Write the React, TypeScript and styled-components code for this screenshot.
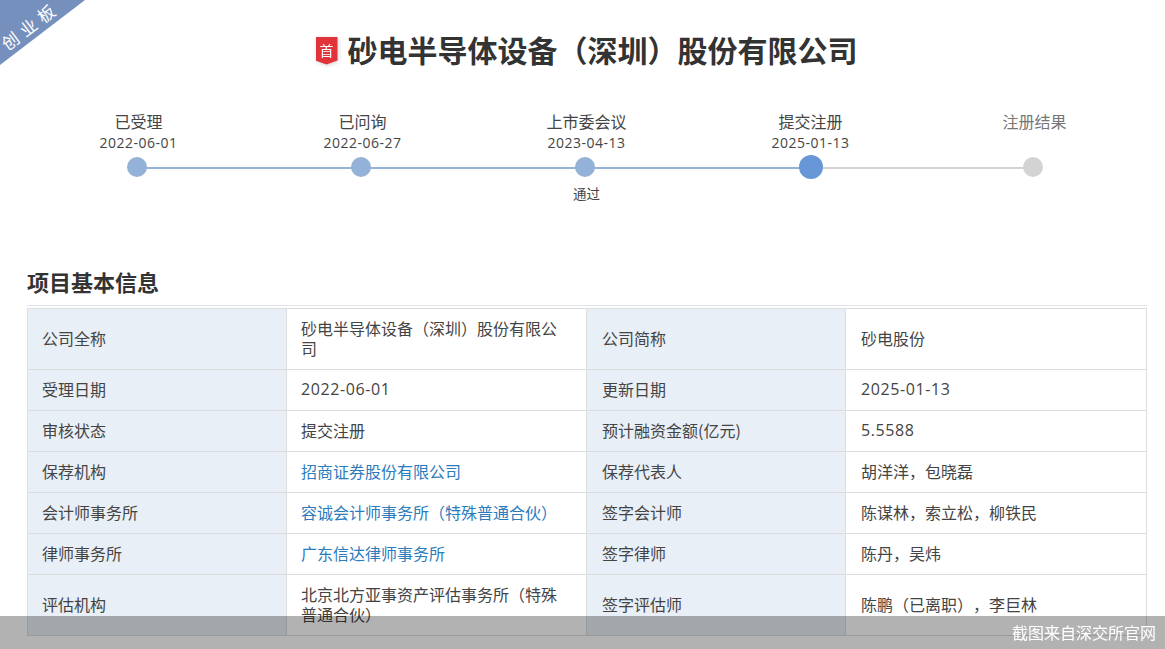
import React from 'react'
import styled, { createGlobalStyle } from 'styled-components'

const GlobalStyle = createGlobalStyle`
  html, body {
    margin: 0;
    height: 100%;
    overflow: hidden;
    background: #fff;
    font-family: "Noto Sans CJK SC", "Noto Sans", sans-serif;
    color: #333;
    text-spacing-trim: space-all;
  }
`

const numberFont = `"Open Sans", "Noto Sans CJK SC", sans-serif`

const steps = [
  { name: '已受理', date: '2022-06-01', state: 'done' },
  { name: '已问询', date: '2022-06-27', state: 'done' },
  { name: '上市委会议', date: '2023-04-13', state: 'done', note: '通过' },
  { name: '提交注册', date: '2025-01-13', state: 'current' },
  { name: '注册结果', date: '', state: 'todo' },
]

type Cell = { text: string; link?: boolean; num?: boolean }
const rows: [string, Cell, string, Cell][] = [
  ['公司全称', { text: '砂电半导体设备（深圳）股份有限公司' }, '公司简称', { text: '砂电股份' }],
  ['受理日期', { text: '2022-06-01', num: true }, '更新日期', { text: '2025-01-13', num: true }],
  ['审核状态', { text: '提交注册' }, '预计融资金额(亿元)', { text: '5.5588', num: true }],
  ['保荐机构', { text: '招商证券股份有限公司', link: true }, '保荐代表人', { text: '胡洋洋，包晓磊' }],
  ['会计师事务所', { text: '容诚会计师事务所（特殊普通合伙）', link: true }, '签字会计师', { text: '陈谋林，索立松，柳铁民' }],
  ['律师事务所', { text: '广东信达律师事务所', link: true }, '签字律师', { text: '陈丹，吴炜' }],
  ['评估机构', { text: '北京北方亚事资产评估事务所（特殊普通合伙）' }, '签字评估师', { text: '陈鹏（已离职），李巨林' }],
]

const App = () => {
  return (
    <Page>
      <GlobalStyle />
      <Ribbon>
        <RibbonText>创 业 板</RibbonText>
      </Ribbon>
      <TitleRow>
        <BadgeWrap>
          <Badge>首</Badge>
        </BadgeWrap>
        <Title>砂电半导体设备（深圳）股份有限公司</Title>
      </TitleRow>
      <Timeline>
        {steps.map((step, i) => (
          <Step key={step.name}>
            <StepName $todo={step.state === 'todo'}>{step.name}</StepName>
            <StepDate>{step.date}</StepDate>
            <Track>
              {i < steps.length - 1 && <Connector $state={step.state} />}
              <Dot $state={step.state} />
            </Track>
            {step.note && <StepNote>{step.note}</StepNote>}
          </Step>
        ))}
      </Timeline>
      <SectionTitle>项目基本信息</SectionTitle>
      <InfoTable>
        <colgroup>
          <col width="259" />
          <col width="300" />
          <col width="259" />
          <col width="301" />
        </colgroup>
        <tbody>
          {rows.map(([k1, v1, k2, v2]) => (
            <tr key={k1}>
              <Label>{k1}</Label>
              <Value $link={v1.link} $num={v1.num}>{v1.text}</Value>
              <Label>{k2}</Label>
              <Value $link={v2.link} $num={v2.num}>{v2.text}</Value>
            </tr>
          ))}
        </tbody>
      </InfoTable>
      <Watermark>截图来自深交所官网</Watermark>
    </Page>
  )
}

export default App

const Page = styled.div`
  padding: 0 18px 0 27px;
  height: 649px;
  box-sizing: border-box;
  overflow: hidden;
`

const Ribbon = styled.div`
  position: absolute;
  left: 0;
  top: 0;
  width: 85px;
  height: 65px;
  background: #7690bd;
  clip-path: polygon(0 0, 100% 0, 0 100%);
`

const RibbonText = styled.span`
  position: absolute;
  left: -3px;
  top: 17px;
  width: 62px;
  font-size: 17px;
  line-height: 20px;
  word-spacing: 1.5px;
  color: #fff;
  white-space: nowrap;
  text-align: center;
  transform: rotate(-37deg);
`

const TitleRow = styled.div`
  display: flex;
  align-items: center;
  justify-content: center;
  gap: 10px;
  height: 100px;
  margin-left: -1px;
  padding-bottom: 3px;
  box-sizing: border-box;
`

const BadgeWrap = styled.div`
  flex: none;
  margin-top: 4px;
  filter: drop-shadow(1px 1px 2px rgba(0, 0, 0, 0.18));
`

const Badge = styled.div`
  width: 22px;
  height: 28px;
  padding-top: 4px;
  box-sizing: border-box;
  background: #e1333a;
  color: #fff;
  font-size: 14px;
  line-height: 18px;
  text-align: center;
  clip-path: polygon(0 0, 100% 0, 100% 86%, 50% 100%, 0 86%);
`

const Title = styled.h1`
  margin: 0;
  font-size: 30px;
  line-height: 40px;
  font-weight: 700;
  color: #333;
`

const Timeline = styled.div`
  display: flex;
  margin-left: -2px;
  height: 170px;
`

const Step = styled.div`
  width: 224px;
  flex: none;
  display: flex;
  flex-direction: column;
  align-items: center;
  padding-top: 10px;
`

const StepName = styled.div<{ $todo?: boolean }>`
  padding-left: 3px;
  font-size: 16px;
  line-height: 22px;
  color: ${({ $todo }) => ($todo ? '#777' : '#444')};
  white-space: nowrap;
`

const StepDate = styled.div`
  padding-left: 3px;
  font-family: ${numberFont};
  font-size: 14px;
  letter-spacing: 0.5px;
  line-height: 22px;
  height: 20px;
  color: #444;
`

const Track = styled.div`
  position: relative;
  width: 100%;
  height: 28px;
  margin-top: 1px;
  display: flex;
  align-items: center;
  justify-content: center;
`

const Connector = styled.div<{ $state: string }>`
  position: absolute;
  left: 50%;
  top: 14px;
  width: 100%;
  height: 2px;
  background: ${({ $state }) => ($state === 'current' ? '#d3d3d3' : '#94b1d7')};
`

const Dot = styled.div<{ $state: string }>`
  position: relative;
  border-radius: 50%;
  width: ${({ $state }) => ($state === 'current' ? 24 : 20)}px;
  height: ${({ $state }) => ($state === 'current' ? 24 : 20)}px;
  margin-left: ${({ $state }) => ($state === 'current' ? 4 : 0)}px;
  background: ${({ $state }) =>
    $state === 'current' ? '#6897d8' : $state === 'todo' ? '#d3d3d3' : '#94b1d7'};
`

const StepNote = styled.div`
  padding-left: 3px;
  font-size: 13.5px;
  line-height: 18px;
  margin-top: 3px;
  color: #444;
`

const SectionTitle = styled.h2`
  margin: 0;
  height: 35px;
  font-size: 22px;
  line-height: 22px;
  font-weight: 700;
  color: #333;
  border-bottom: 1px solid #dfe5ea;
  box-sizing: content-box;
`

const InfoTable = styled.table`
  width: 1120px;
  margin-top: 2px;
  border-collapse: collapse;
  table-layout: fixed;
  font-size: 16px;
  line-height: 20px;

  td {
    padding: 9px 15px 11px;
  }
  td:nth-child(-n + 2) {
    padding-left: 14px;
  }
`

const Label = styled.td`
  background: #e8eff7;
  border: 1px solid #ddd;
  color: #444;
`

const Value = styled.td<{ $link?: boolean; $num?: boolean }>`
  background: #fff;
  border: 1px solid #ddd;
  color: ${({ $link }) => ($link ? '#2b7bbd' : '#444')};
  ${({ $num }) => $num && `font-family: ${numberFont}; letter-spacing: 0.6px;`}
`

const Watermark = styled.div`
  position: fixed;
  left: 0;
  right: 0;
  bottom: 0;
  height: 33px;
  padding-right: 9px;
  background: rgba(0, 0, 0, 0.3);
  color: #fff;
  font-size: 16px;
  line-height: 33px;
  text-align: right;
`
